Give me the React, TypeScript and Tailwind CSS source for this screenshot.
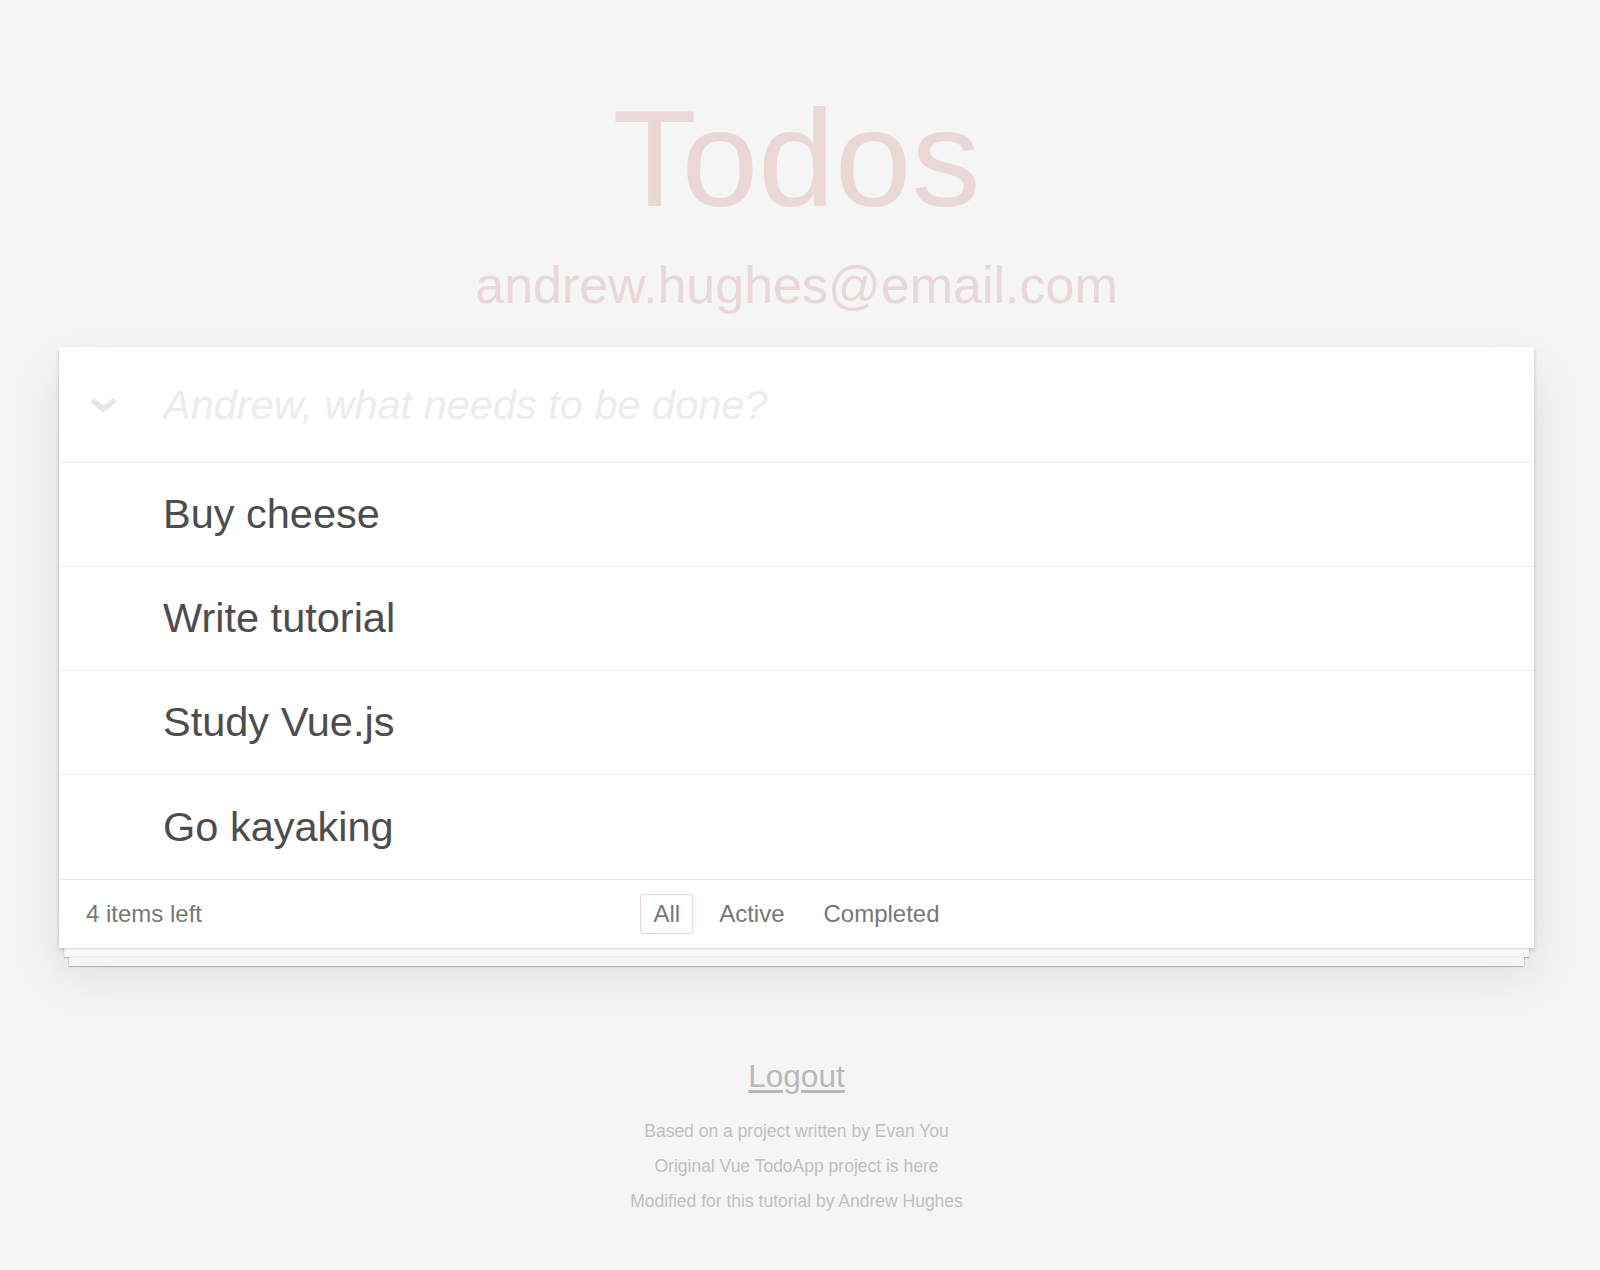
import { useState } from 'react'

const todos = ['Buy cheese', 'Write tutorial', 'Study Vue.js', 'Go kayaking']

const filters = ['All', 'Active', 'Completed']

const App = () => {
  const [filter, setFilter] = useState('All')
  const [text, setText] = useState('')

  return (
    <div className="min-h-[1270px] w-full bg-[#f5f5f5] font-['Liberation_Sans',Arial,sans-serif]">
      <div className="ml-[59px] flex w-[1475px] flex-col items-center pt-[89px]">
        <h1 className="text-[138px] leading-none text-[#ead7d7]">Todos</h1>
        <h3 className="mt-[32px] text-[52px] leading-none text-[#ead7d7]">andrew.hughes@email.com</h3>

        <section className="mt-[36px] w-full">
          <div className="bg-white shadow-[0_2px_4px_0_rgba(0,0,0,0.2),0_25px_50px_0_rgba(0,0,0,0.1)]">
            <header className="flex h-[116px] items-center shadow-[inset_0_-2px_1px_rgba(0,0,0,0.04)]">
              <div className="flex w-[104px] pl-[31px] pt-[4px]">
                <svg width="27" height="18" viewBox="0 0 27 18">
                  <path d="M0 3.5 L4 0 L13.5 7.5 L23 0 L27 3.5 L13.5 15 Z" fill="#e6e6e6" />
                </svg>
              </div>
              <input
                value={text}
                onChange={(e) => setText(e.target.value)}
                placeholder="Andrew, what needs to be done?"
                className="h-full flex-1 bg-transparent text-[41.5px] text-[#4d4d4d] outline-none placeholder:italic placeholder:text-[#ececec]"
              />
            </header>
            <ul>
              {todos.map((todo) => (
                <li key={todo} className="flex h-[104px] items-center border-b border-[#ededed] pl-[104px] text-[41.5px] text-[#4d4d4d] last:border-b-0">
                  {todo}
                </li>
              ))}
            </ul>
            <footer className="grid h-[69px] grid-cols-[1fr_auto_1fr] items-center border-t border-[#e6e6e6] px-[27px] text-[#777777]">
              <span className="text-[24px]">4 items left</span>
              <div className="flex gap-[13px]">
                {filters.map((f) => (
                  <button
                    key={f}
                    onClick={() => setFilter(f)}
                    className={
                      f === filter
                        ? 'flex h-[40px] items-center rounded-[3px] border border-[rgba(175,47,47,0.2)] px-[12px] text-[24px]'
                        : 'flex h-[40px] items-center rounded-[3px] border border-transparent px-[12px] text-[24px]'
                    }
                  >
                    {f}
                  </button>
                ))}
              </div>
              <span />
            </footer>
          </div>
          <div className="mx-[5px] h-[9px] bg-[#f8f8f8] shadow-[inset_0_1px_2px_rgba(0,0,0,0.15),0_1px_1px_rgba(0,0,0,0.2)]" />
          <div className="mx-[10px] h-[9px] bg-[#f5f5f5] shadow-[0_1px_1px_rgba(0,0,0,0.2),1px_0_1px_rgba(0,0,0,0.08),-1px_0_1px_rgba(0,0,0,0.08)]" />
        </section>

        <a href="#" className="mt-[95px] text-[31.5px] leading-none text-[#b8b8b8] underline underline-offset-[3px]">
          Logout
        </a>
        <div className="mt-[21px] flex flex-col items-center text-[17.5px] leading-[35px] text-[#c0c0c0]">
          <p>Based on a project written by Evan You</p>
          <p>Original Vue TodoApp project is here</p>
          <p>Modified for this tutorial by Andrew Hughes</p>
        </div>
      </div>
    </div>
  )
}

export default App
